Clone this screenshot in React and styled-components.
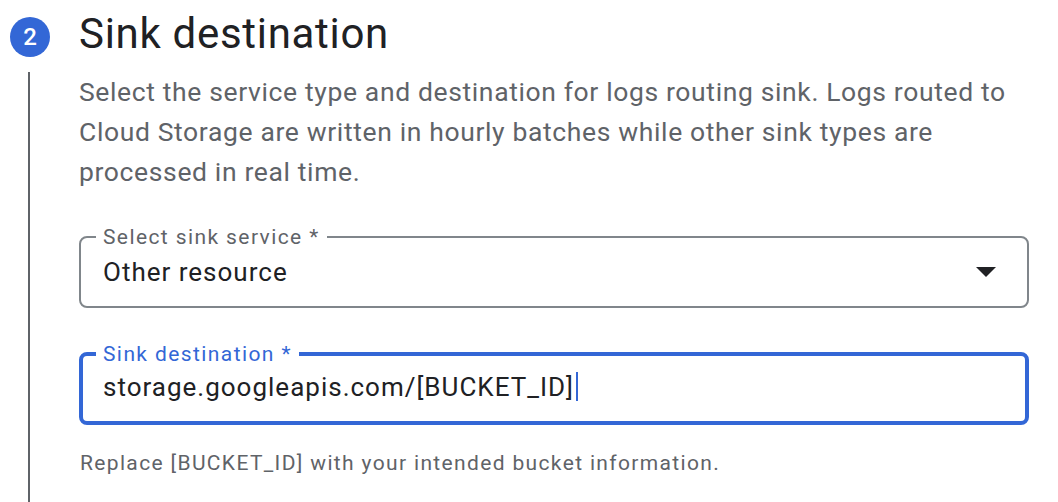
import styled, { createGlobalStyle } from 'styled-components';

const Global = createGlobalStyle`
    body {
        margin: 0;
        background: #fff;
        font-family: Roboto, "Noto Sans", Arial, sans-serif;
    }
`;

const Step = styled.section`
    display: grid;
    grid-template-columns: 69px 1fr;
    padding: 0 29px 0 10px;
`;

const Badge = styled.div`
    width: 40px;
    height: 40px;
    margin-top: 17px;
    border-radius: 50%;
    background: #3367d6;
    color: #fff;
    font-size: 24px;
    font-weight: 500;
    display: flex;
    align-items: center;
    justify-content: center;
`;

const Title = styled.h2`
    margin: 0;
    padding-top: 9px;
    font-size: 42px;
    font-weight: 400;
    letter-spacing: 0.7px;
    line-height: 50px;
    color: #202124;
`;

const Rail = styled.div`
    margin: 13px 0 0 18px;
    width: 2px;
    height: 440px;
    background: #5f6368;
`;

const Body = styled.div`
    padding-top: 13px;
`;

const Description = styled.p`
    margin: 0 0 33px;
    font-size: 26.5px;
    letter-spacing: 0.63px;
    line-height: 40px;
    color: #5f6368;
`;

const Field = styled.fieldset`
    margin: 0 0 ${p => (p.$focused ? 26 : 34)}px;
    padding: 0 0 0 ${p => (p.$focused ? 13 : 15)}px;
    border: ${p => (p.$focused ? 4 : 2)}px solid ${p => (p.$focused ? '#3367d6' : '#80868b')};
    border-radius: 8px;
    min-width: 0;
`;

const Label = styled.legend`
    padding: 0 7px;
    font-size: 21px;
    letter-spacing: 1.4px;
    line-height: 24px;
    color: ${p => (p.$focused ? '#3367d6' : '#5f6368')};
`;

const ValueRow = styled.div`
    display: flex;
    align-items: center;
    height: 45px;
    padding: 0 31px 12px 7px;
    margin-top: ${p => (p.$focused ? -2 : 0)}px;
    font-size: 26px;
    letter-spacing: 1px;
    color: #202124;
`;

const Value = styled.span`
    flex: 1;
    display: flex;
    align-items: center;
`;

const Caret = styled.span`
    display: inline-block;
    width: 2px;
    height: 29px;
    background: #3367d6;
    margin-left: 2px;
`;

const Arrow = styled.span`
    width: 0;
    height: 0;
    border-left: 10px solid transparent;
    border-right: 10px solid transparent;
    border-top: 10px solid #202124;
`;

const Hint = styled.p`
    margin: 0;
    padding-left: 1px;
    font-size: 21px;
    letter-spacing: 1.35px;
    line-height: 24px;
    color: #5f6368;
`;

const App = () => {
    return (
        <>
            <Global />
            <Step>
                <Badge>2</Badge>
                <Title>Sink destination</Title>
                <Rail />
                <Body>
                    <Description>
                        Select the service type and destination for logs routing sink. Logs routed to
                        Cloud Storage are written in hourly batches while other sink types are
                        processed in real time.
                    </Description>

                    <Field>
                        <Label>Select sink service *</Label>
                        <ValueRow>
                            <Value>Other resource</Value>
                            <Arrow />
                        </ValueRow>
                    </Field>

                    <Field $focused>
                        <Label $focused>Sink destination *</Label>
                        <ValueRow $focused>
                            <Value>
                                storage.googleapis.com/[BUCKET_ID]
                                <Caret />
                            </Value>
                        </ValueRow>
                    </Field>

                    <Hint>Replace [BUCKET_ID] with your intended bucket information.</Hint>
                </Body>
            </Step>
        </>
    );
}

export default App;
